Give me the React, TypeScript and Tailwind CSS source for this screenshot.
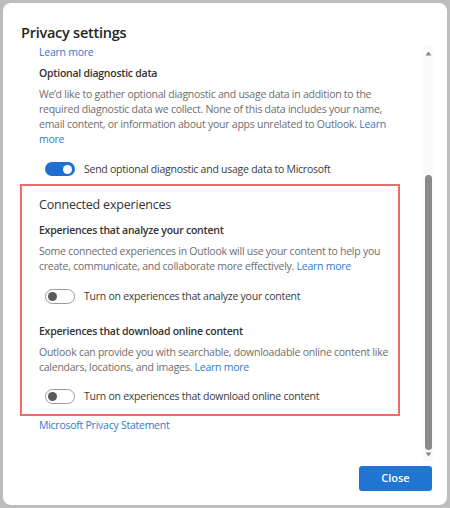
import React from "react";

function Toggle({ on }: { on: boolean }) {
  if (on) {
    return (
      <div className="ml-[6px] flex h-[14px] w-[30px] shrink-0 items-center justify-end rounded-full bg-[#1f6fd0] pr-[3px]">
        <div className="h-[9px] w-[9px] rounded-full bg-white" />
      </div>
    );
  }
  return (
    <div className="ml-[6px] flex h-[15px] w-[30px] shrink-0 items-center rounded-full border border-[#9a9a9a] bg-white pl-[2px]">
      <div className="h-[9px] w-[9px] rounded-full bg-[#5a5a5a]" />
    </div>
  );
}

function ToggleRow({ on, label }: { on: boolean; label: string }) {
  return (
    <div className="flex h-[20px] items-center gap-[9px]">
      <Toggle on={on} />
      <span className="text-[#3b3b3b]">{label}</span>
    </div>
  );
}

const link = "text-[#2f7bd0]";

export default function App() {
  return (
    <div
      className="h-[508px] w-[450px] overflow-hidden bg-[#bdbdbd] pl-[3px] pr-[3px] pt-[3px] pb-[3px]"
      style={{ fontFamily: '"Open Sans", "Noto Sans", sans-serif' }}
    >
      <div className="flex h-[502px] w-[444px] flex-col rounded-[8px] bg-white">
        <div className="pl-[18px] pt-[20px] text-[14.5px] font-semibold leading-[20px] tracking-[-0.25px] text-[#242424]">
          Privacy settings
        </div>
        <div className="mt-[2px] flex h-[416px] pl-[17px]">
          <div className="w-[380px] text-[10.5px] leading-[15px] tracking-[-0.25px]">
            <div className="pl-[19px]">
              <div className={link}>Learn more</div>
              <div className="mt-[6px] font-semibold text-[#333333]">Optional diagnostic data</div>
              <p className="mt-[6px] pr-[12px] text-[#6e6e6e]">
                We&rsquo;d like to gather optional diagnostic and usage data in addition to the required diagnostic data we collect. None of this data includes your name, email content, or information about your apps unrelated to Outlook.{" "}
                <span className={link}>Learn more</span>
              </p>
              <div className="mt-[12px]">
                <ToggleRow on={true} label="Send optional diagnostic and usage data to Microsoft" />
              </div>
            </div>
            <div className="mt-[5px] border-2 border-[#f06a6a] pb-[8px] pl-[17px] pr-[4px] pt-[9px]">
              <div className="text-[12.5px] leading-[19px] tracking-[-0.2px] text-[#333333]">Connected experiences</div>
              <div className="mt-[9px] font-semibold text-[#333333]">Experiences that analyze your content</div>
              <p className="mt-[6px] text-[#6e6e6e]">
                Some connected experiences in Outlook will use your content to help you create, communicate, and collaborate more effectively.{" "}
                <span className={link}>Learn more</span>
              </p>
              <div className="mt-[12px]">
                <ToggleRow on={false} label="Turn on experiences that analyze your content" />
              </div>
              <div className="mt-[18px] font-semibold text-[#333333]">Experiences that download online content</div>
              <p className="mt-[6px] text-[#6e6e6e]">
                Outlook can provide you with searchable, downloadable online content like calendars, locations, and images.{" "}
                <span className={link}>Learn more</span>
              </p>
              <div className="mt-[11px]">
                <ToggleRow on={false} label="Turn on experiences that download online content" />
              </div>
            </div>
            <div className={`mt-[2px] pl-[19px] ${link}`}>Microsoft Privacy Statement</div>
          </div>
          <div className="ml-[23px] flex w-[10px] flex-col items-center bg-[#fafafa] pt-[4px] pb-[4px]">
            <svg width="7" height="5" viewBox="0 0 7 5" className="mt-[2px]">
              <path d="M3.5 0.5 L6.5 4.5 L0.5 4.5 Z" fill="#8a8a8a" />
            </svg>
            <div className="mt-[119px] h-[277px] w-[7px] rounded-full bg-[#8a8a8a]" />
            <svg width="7" height="5" viewBox="0 0 7 5" className="mt-[2px]">
              <path d="M0.5 0.5 L6.5 0.5 L3.5 4.5 Z" fill="#8a8a8a" />
            </svg>
          </div>
        </div>
        <div className="mt-[5px] flex justify-end pr-[15px]">
          <button className="h-[25px] w-[73px] rounded-[3px] bg-[#1f74d4] text-[11px] font-semibold text-white">
            Close
          </button>
        </div>
      </div>
    </div>
  );
}
